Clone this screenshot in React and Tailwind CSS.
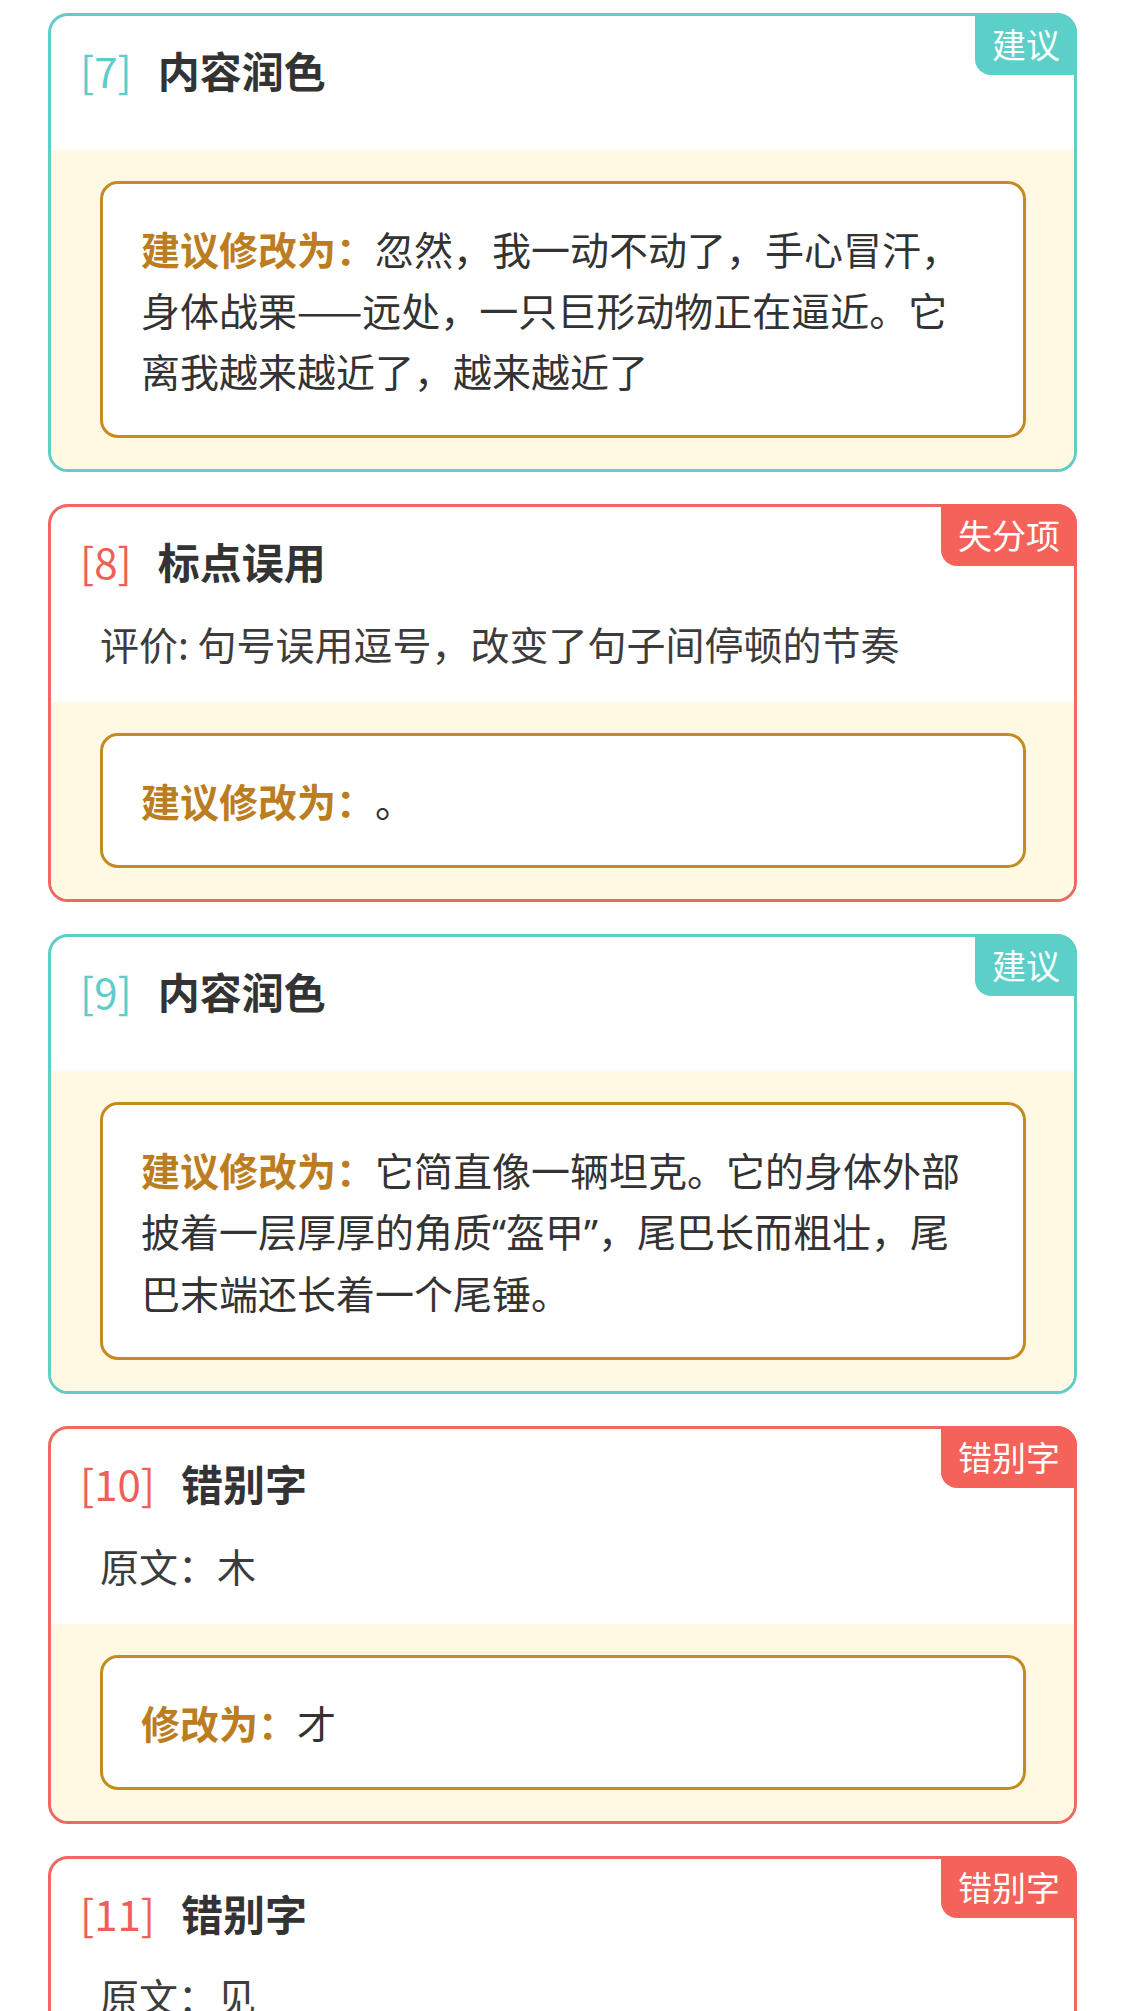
import React from 'react'

const FONT = { fontFamily: '"Noto Sans CJK SC", "Noto Sans", sans-serif' }

const tones = {
  teal: {
    border: 'border-[#62cdc7]',
    badge: 'bg-[#5ccfc9]',
    num: 'text-[#5ccdc8]',
  },
  red: {
    border: 'border-[#ee6961]',
    badge: 'bg-[#f4625a]',
    num: 'text-[#ef5f57]',
  },
}

const items = [
  {
    no: 7,
    tone: 'teal',
    tag: '建议',
    title: '内容润色',
    label: '建议修改为：',
    text: '忽然，我一动不动了，手心冒汗，身体战栗——远处，一只巨形动物正在逼近。它离我越来越近了，越来越近了',
  },
  {
    no: 8,
    tone: 'red',
    tag: '失分项',
    title: '标点误用',
    note: '评价: 句号误用逗号，改变了句子间停顿的节奏',
    label: '建议修改为：',
    text: '。',
  },
  {
    no: 9,
    tone: 'teal',
    tag: '建议',
    title: '内容润色',
    label: '建议修改为：',
    text: '它简直像一辆坦克。它的身体外部披着一层厚厚的角质“盔甲”，尾巴长而粗壮，尾巴末端还长着一个尾锤。',
  },
  {
    no: 10,
    tone: 'red',
    tag: '错别字',
    title: '错别字',
    note: '原文：木',
    label: '修改为：',
    text: '才',
  },
  {
    no: 11,
    tone: 'red',
    tag: '错别字',
    title: '错别字',
    note: '原文：见',
  },
]

// curly quotes come out full width in the CJK font, the screenshot has narrow ones
function Text({ value }) {
  return value.split(/([“”])/).map((part, i) =>
    part === '“' || part === '”' ? (
      <span key={i} className="font-['Noto_Sans']">{part}</span>
    ) : (
      part
    )
  )
}

function ReviewCard({ item }) {
  const t = tones[item.tone]
  return (
    <div className={`relative rounded-[20px] border-[3px] bg-white ${t.border}`}>
      <div
        className={`absolute -top-[3px] -right-[3px] h-[62px] px-[17px] rounded-tr-[20px] rounded-bl-[16px] text-white text-[34px] leading-[62px] ${t.badge}`}
      >
        {item.tag}
      </div>

      <div className={`pl-[29px] pt-[24px] ${item.note ? 'pb-[29px]' : 'pb-[50px]'}`}>
        <div className="flex items-center h-[60px] text-[42px] leading-[60px]">
          <span className={`font-normal mr-[26px] ${t.num}`}>[{item.no}]</span>
          <span className="font-bold text-[#333]">{item.title}</span>
        </div>
        {item.note && (
          <div className="mt-[22px] pl-[20px] text-[39px] leading-[60px] text-[#3c3c3c]">
            {item.note}
          </div>
        )}
      </div>

      {item.label && (
        <div className="bg-[#fff8e3] rounded-b-[17px] pt-[31px] pb-[31px] pl-[49px] pr-[48px]">
          <div className="rounded-[18px] border-[3px] border-[#c48b22] bg-white px-[38px] py-[34px] text-[39px] leading-[61px] text-[#333]">
            <span className="font-bold text-[#bb7d1f]">{item.label}</span>
            <Text value={item.text} />
          </div>
        </div>
      )}
    </div>
  )
}

export default function App() {
  return (
    <div className="min-h-screen bg-white px-[48px] pt-[13px] [text-spacing-trim:space-all]" style={FONT}>
      <div className="flex flex-col gap-[32px]">
        {items.map((it) => (
          <ReviewCard key={it.no} item={it} />
        ))}
      </div>
    </div>
  )
}
